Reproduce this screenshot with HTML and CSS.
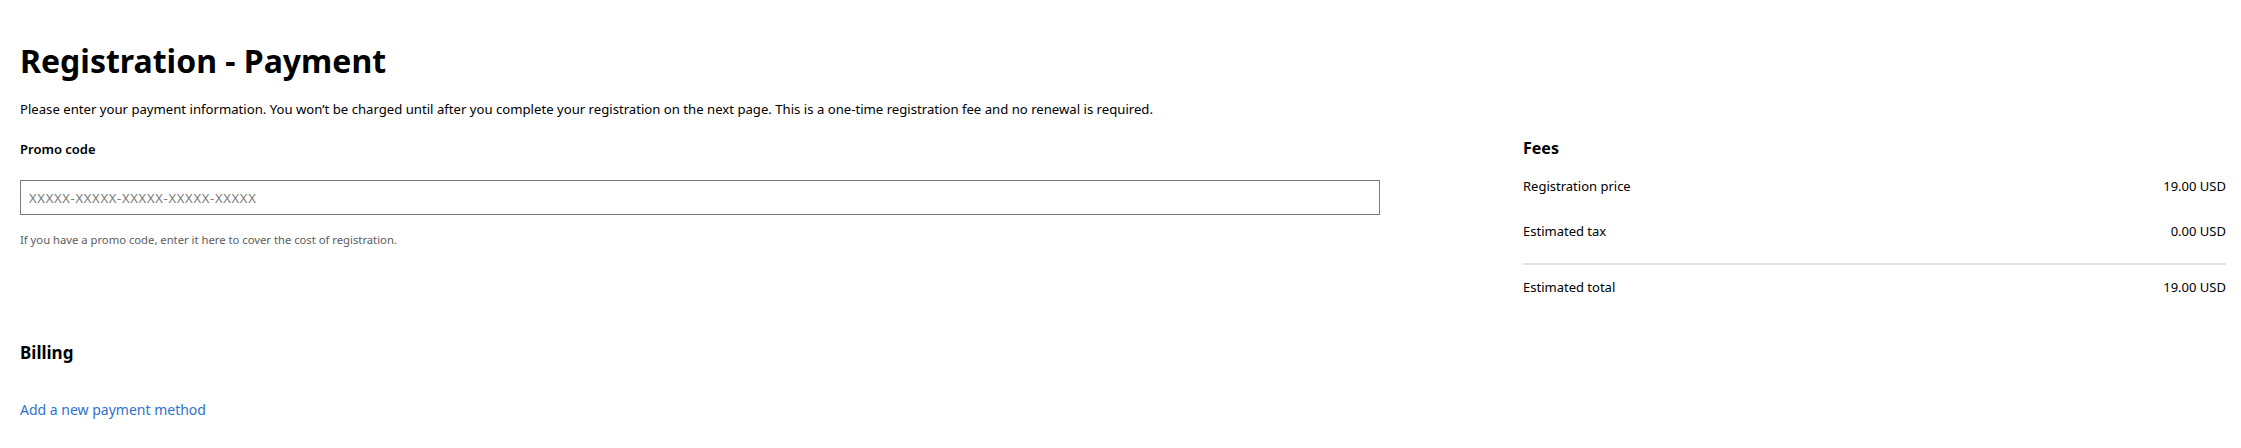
FILE: index.html
```html
<!DOCTYPE html>
<html lang="en">
<head>
<meta charset="utf-8">
<title>Registration - Payment</title>
<link rel="stylesheet" href="styles.css">
</head>
<body>
<main class="page">
  <h1 class="title">Registration - Payment</h1>
  <p class="intro">Please enter your payment information. You won’t be charged until after you complete your registration on the next page. This is a one-time registration fee and no renewal is required.</p>
  <div class="columns">
    <section class="form-col">
      <label class="field-label" for="promo">Promo code</label>
      <input class="promo-input" id="promo" type="text" placeholder="XXXXX-XXXXX-XXXXX-XXXXX-XXXXX">
      <p class="help">If you have a promo code, enter it here to cover the cost of registration.</p>
      <h2 class="section-title billing">Billing</h2>
      <a class="link" href="#">Add a new payment method</a>
    </section>
    <aside class="fees-col">
      <h2 class="section-title">Fees</h2>
      <div class="fee-row first"><span>Registration price</span><span>19.00 USD</span></div>
      <div class="fee-row second"><span>Estimated tax</span><span>0.00 USD</span></div>
      <hr class="divider">
      <div class="fee-row total"><span>Estimated total</span><span>19.00 USD</span></div>
    </aside>
  </div>
</main>
</body>
</html>
```
FILE: styles.css
```css
html, body {
  margin: 0;
  padding: 0;
  background: #ffffff;
}
body {
  font-family: "Noto Sans", "Open Sans", "DejaVu Sans", sans-serif;
  color: #000000;
  font-size: 13px;
}
.page {
  padding: 0 15px 0 20px;
}
.title {
  margin: 0;
  padding-top: 41px;
  font-size: 32px;
  line-height: 40px;
  font-weight: 700;
}
.intro {
  margin: 18px 0 0;
  font-size: 13.15px;
  line-height: 20px;
}
.columns {
  display: flex;
  align-items: flex-start;
  gap: 143px;
  margin-top: 17px;
}
.form-col {
  flex: 0 0 1360px;
  display: flex;
  flex-direction: column;
  align-items: flex-start;
}
.fees-col {
  flex: 1 1 auto;
  display: flex;
  flex-direction: column;
  padding-top: 1px;
}
.field-label {
  margin-top: 3px;
  font-size: 13px;
  line-height: 20px;
  font-weight: 600;
}
.promo-input {
  box-sizing: border-box;
  width: 100%;
  height: 35px;
  margin-top: 21px;
  padding: 0 8px;
  border: 1px solid #7a7a7a;
  border-radius: 0;
  font-family: inherit;
  font-size: 13px;
  letter-spacing: 0.7px;
  color: #000;
  outline: none;
}
.promo-input::placeholder {
  color: #7a7a7a;
}
.help {
  margin: 17px 0 0;
  font-size: 11.25px;
  line-height: 16px;
  color: #5c5c5c;
}
.section-title {
  margin: 0;
  font-size: 16px;
  line-height: 22px;
  font-weight: 700;
}
.billing {
  margin-top: 94px;
  font-size: 17px;
}
.link {
  margin-top: 36px;
  font-size: 14px;
  line-height: 20px;
  color: #2f72d0;
  text-decoration: none;
}
.fee-row {
  display: flex;
  justify-content: space-between;
  font-size: 13px;
  line-height: 20px;
}
.fee-row.first {
  margin-top: 17px;
}
.fee-row.second {
  margin-top: 25px;
}
.divider {
  margin: 22px 0 0;
  border: 0;
  height: 2px;
  background: #e3e3e3;
}
.fee-row.total {
  margin-top: 12px;
}
```
